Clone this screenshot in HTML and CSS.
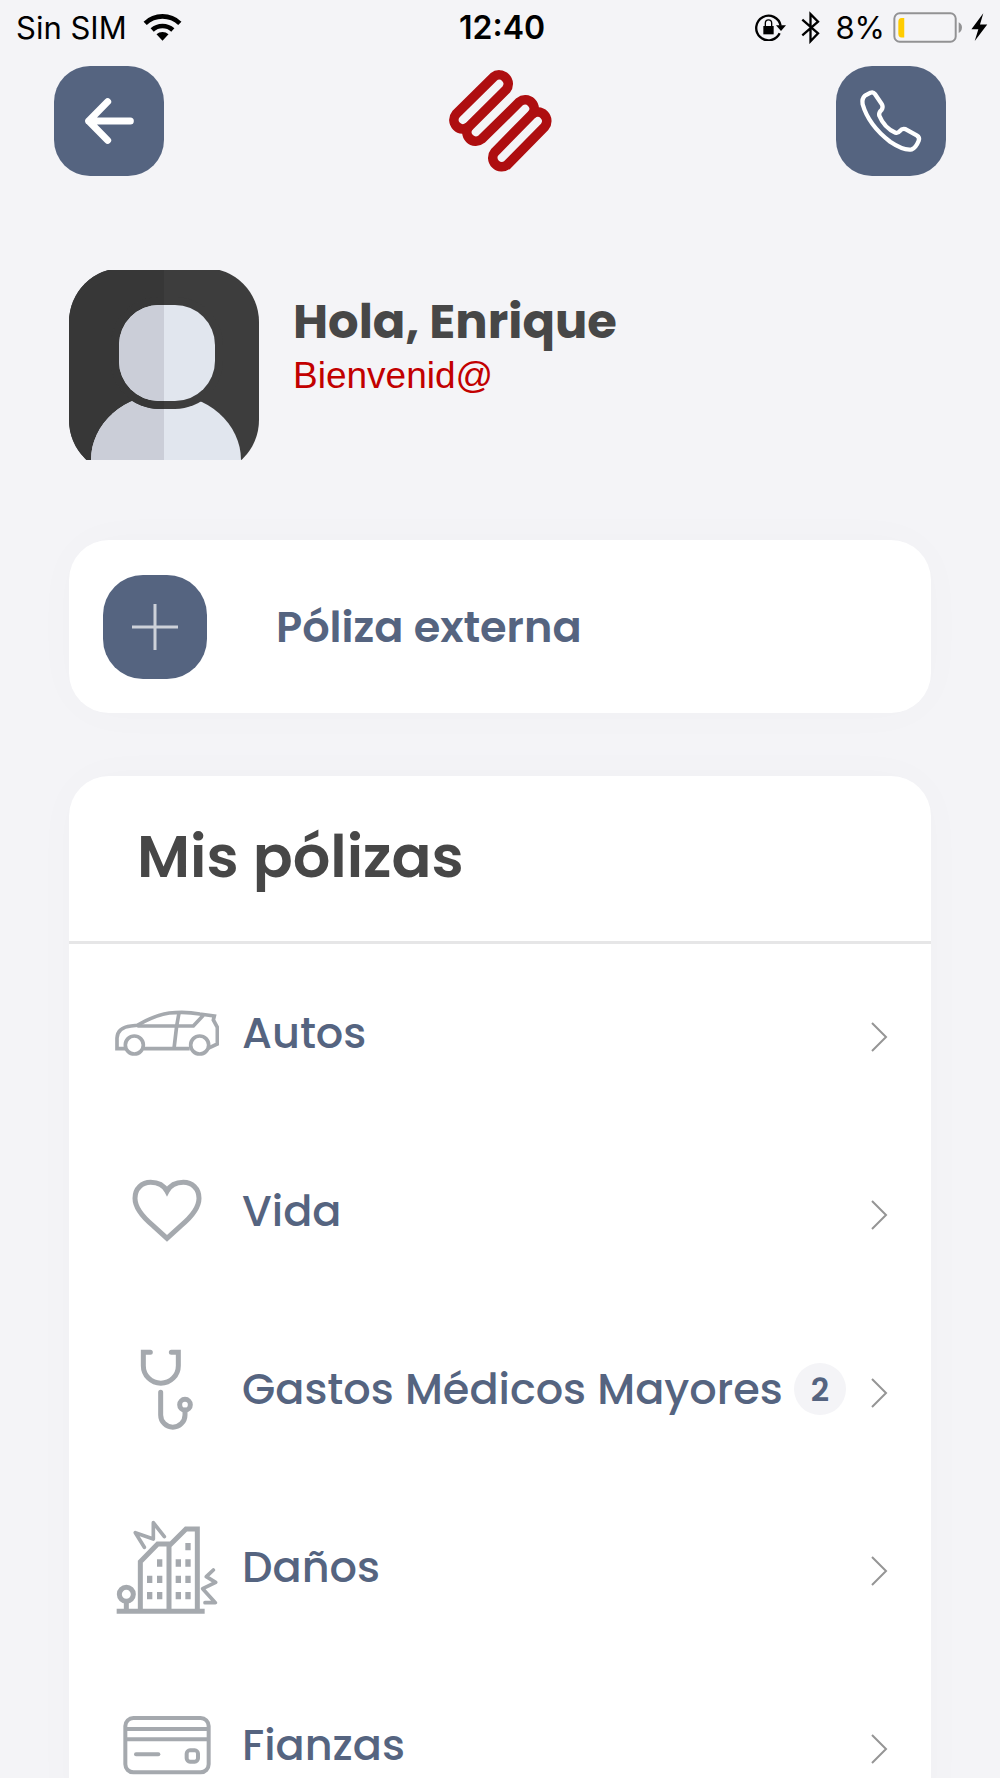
FILE: index.html
```
<!DOCTYPE html>
<html lang="es">
<head>
  <meta charset="utf-8">
  <meta name="viewport" content="width=device-width, initial-scale=1">
  <title>Mis pólizas</title>
  <link rel="stylesheet" href="styles.css">
</head>
<body>
  <div class="status-bar">
    <div class="status-left">
      <span>Sin SIM</span>
      <svg class="wifi" viewBox="430 38 116 84" width="39" height="28">
        <g fill="none" stroke="#000" stroke-width="14">
          <path d="M436 69a75 75 0 0 1 104 0"/>
          <path d="M457 89a46 46 0 0 1 62 0"/>
        </g>
        <path d="M470 102a26 26 0 0 1 36 0l-18 19z"/>
      </svg>
    </div>
    <div class="status-time">12:40</div>
    <div class="status-right">
      <svg class="lock" viewBox="78 38 93 84" width="31" height="28">
        <path d="M152 99A37 37 0 1 1 155 76" fill="none" stroke="#000" stroke-width="7"/>
        <path d="M141 75h30l-15 17z"/>
        <path d="M103 77h31v25h-31z"/>
        <path d="M109 78V68a9 9 0 0 1 19 0v10" fill="none" stroke="#000" stroke-width="4"/>
      </svg>
      <svg class="bluetooth" viewBox="216 32 58 98" width="19" height="33">
        <path d="M220 57l48 42-23 24V40l23 23-48 42" fill="none" stroke="#000" stroke-width="7"/>
      </svg>
      <span>8%</span>
      <svg class="battery" viewBox="489 33 210 94" width="70" height="31">
        <rect x="492" y="37" width="186" height="86" rx="16" fill="none" stroke="#929294" stroke-width="6"/>
        <path d="M522 51v59h-8q-10 0-10-12V63q0-12 10-12z" fill="#ffcc00"/>
        <path d="M687 64q10 5 10 16t-10 17z" fill="#929294"/>
      </svg>
      <svg class="bolt" viewBox="721 38 51 88" width="17" height="29">
        <path d="M758 39l-36 48h21l-11 36 38-50h-22z"/>
      </svg>
    </div>
  </div>

  <header class="top-nav">
    <button class="nav-button" type="button" aria-label="Regresar">
      <svg viewBox="252 288 150 150" width="50" height="50">
        <path d="M391 363H266M323 305l-57 58 57 58" fill="none" stroke="#fff" stroke-width="21" stroke-linecap="round" stroke-linejoin="round"/>
      </svg>
    </button>
    <svg class="logo" viewBox="84 208 314 310" width="105" height="103">
      <g fill="none" stroke="#ae0e10" stroke-width="29">
        <path d="M107 341L220 229a27 27 0 0 1 38 38L145 379a27 27 0 0 1-38-38z"/>
        <path d="M146 378a27 27 0 0 0 38 38L298 304a27 27 0 0 1 38 38"/>
        <path d="M224 455L336 341a27 27 0 0 1 38 38L262 493a27 27 0 0 1-38-38z"/>
      </g>
    </svg>
    <button class="nav-button" type="button" aria-label="Llamar">
      <svg viewBox="386 266 196 196" width="65" height="65">
        <path d="M404 286L421 277Q429 274 434 281L455 312Q460 321 454 329Q445 337 447 346Q462 383 496 398Q504 400 509 393Q516 384 526 387L560 406Q570 412 566 422Q557 444 545 448Q520 452 480 425Q415 375 397 312Q394 295 404 286Z" fill="none" stroke="#fff" stroke-width="13" stroke-linejoin="round"/>
      </svg>
    </button>
  </header>

  <section class="profile">
    <svg class="avatar" viewBox="0 0 190 190" width="190" height="190">
      <defs>
        <clipPath id="left-half"><rect width="95" height="190"/></clipPath>
      </defs>
      <rect y="-2" width="190" height="206" rx="54" fill="#3d3d3d"/>
      <rect y="-2" width="190" height="206" rx="54" fill="#373737" clip-path="url(#left-half)"/>
      <ellipse cx="97" cy="190" rx="75" ry="66" fill="#e1e6ee"/>
      <ellipse cx="97" cy="190" rx="75" ry="66" fill="#cbced8" clip-path="url(#left-half)"/>
      <rect x="42" y="27" width="112" height="112" rx="48" fill="#3d3d3d"/>
      <rect x="42" y="27" width="112" height="112" rx="48" fill="#373737" clip-path="url(#left-half)"/>
      <rect x="50" y="35" width="96" height="96" rx="40" fill="#e1e6ee"/>
      <rect x="50" y="35" width="96" height="96" rx="40" fill="#cbced8" clip-path="url(#left-half)"/>
    </svg>
    <div class="greeting">
      <h1>Hola, Enrique</h1>
      <p>Bienvenid@</p>
    </div>
  </section>

  <main class="content">
    <button class="card add-policy" type="button">
      <span class="add-icon">
        <svg viewBox="0 0 48 48" width="48" height="48">
          <path d="M1 24h46M24 1v46" stroke="#cdd1d9" stroke-width="3"/>
        </svg>
      </span>
      <span>Póliza externa</span>
    </button>

    <section class="card policies">
      <h2>Mis pólizas</h2>
      <ul class="policy-list">
        <li>
          <a href="#autos">
            <svg class="policy-icon" viewBox="46 4 312 312">
              <g stroke-width="11">
                <path d="M76 207H52v-32q2-32 42-36l19-2q50-30 96-37 50-5 91 3l44 6-3 12 12 22v50l-28 13M132 207h138"/>
                <path d="M113 139h168l30-32M238 100l-7 39-8 68"/>
                <circle cx="104" cy="196" r="27"/>
                <circle cx="300" cy="196" r="27"/>
              </g>
            </svg>
            <span class="policy-name">Autos</span>
            <svg class="chevron" viewBox="0 0 18 32"><path d="M2 2l14 14L2 30"/></svg>
          </a>
        </li>
        <li>
          <a href="#vida">
            <svg class="policy-icon" viewBox="46 537 312 312">
              <path stroke-width="15" d="M202 775L160 737Q106 692 106 655C106 625 127 607 153 607C176 607 193 617 202 634C211 617 228 607 251 607C277 607 298 625 298 655Q298 692 244 737Z"/>
            </svg>
            <span class="policy-name">Vida</span>
            <svg class="chevron" viewBox="0 0 18 32"><path d="M2 2l14 14L2 30"/></svg>
          </a>
        </li>
        <li>
          <a href="#gastos-medicos">
            <svg class="policy-icon" viewBox="46 21 312 312">
              <g stroke-width="15" stroke-linecap="round">
                <path d="M152 67h-21v40a52 52 0 0 0 105 0V67h-21"/>
                <path d="M183 187v68a36 36 0 0 0 73 0v-14"/>
                <circle cx="256" cy="224" r="16"/>
              </g>
            </svg>
            <span class="policy-name">Gastos Médicos Mayores</span>
            <span class="badge">2</span>
            <svg class="chevron" viewBox="0 0 18 32"><path d="M2 2l14 14L2 30"/></svg>
          </a>
        </li>
        <li>
          <a href="#danos">
            <svg class="policy-icon" viewBox="46 45 312 312">
              <g stroke-width="15">
                <path d="M51 334h264M122 334V185l52-53h34v202M210 136l49-49h34v247M80 305v29"/>
                <circle cx="80" cy="283" r="21"/>
              </g>
              <path stroke-width="11" stroke-linecap="round" stroke-linejoin="round" d="M134 142L107 98l54 19V68l33 42M341 210l-21 20 28 17-39 19 38 42h-31"/>
              <path class="windows" d="M257 129h16v22h-16zM172 178h16v22h-16zM228 178h16v22h-16zM257 178h16v22h-16zM142 227h16v22h-16zM172 227h16v22h-16zM228 227h16v22h-16zM257 227h16v22h-16zM142 276h16v22h-16zM172 276h16v22h-16zM228 276h16v22h-16zM257 276h16v22h-16z"/>
            </svg>
            <span class="policy-name">Daños</span>
            <svg class="chevron" viewBox="0 0 18 32"><path d="M2 2l14 14L2 30"/></svg>
          </a>
        </li>
        <li>
          <a href="#fianzas">
            <svg class="policy-icon" viewBox="46 579 312 312">
              <g stroke-width="12">
                <rect x="77" y="654" width="250" height="163" rx="24"/>
                <path d="M77 687h250M77 718h250"/>
                <path d="M109 763h67" stroke-linecap="round"/>
                <rect x="261" y="751" width="34" height="34" rx="10"/>
              </g>
            </svg>
            <span class="policy-name">Fianzas</span>
            <svg class="chevron" viewBox="0 0 18 32"><path d="M2 2l14 14L2 30"/></svg>
          </a>
        </li>
      </ul>
    </section>
  </main>
</body>
</html>
```
FILE: styles.css
```
* {
  box-sizing: border-box;
}

body {
  height: 100vh;
  margin: 0;
  overflow: hidden;
  background-color: #f4f4f7;
  color: #474747;
  font-family: Poppins, Inter, sans-serif;
}

svg {
  display: block;
  flex: none;
}

/* status bar */
.status-bar {
  display: grid;
  grid-template-columns: 1fr auto 1fr;
  align-items: center;
  height: 54px;
  padding: 0 12px 0 16px;
  color: #000;
  font-family: Inter, sans-serif;
  font-size: 31px;
}

.status-left,
.status-right {
  display: flex;
  align-items: center;
}

.status-left {
  gap: 16px;
}

.status-right {
  justify-content: flex-end;
  gap: 8px;
}

.status-time {
  font-size: 32px;
  font-weight: 600;
}

.bluetooth {
  margin: 0 7px;
}

/* header */
.top-nav {
  display: flex;
  align-items: center;
  justify-content: space-between;
  padding: 12px 54px;
}

.nav-button {
  display: flex;
  align-items: center;
  justify-content: center;
  width: 110px;
  height: 110px;
  padding: 0;
  border: 0;
  border-radius: 36px;
  background-color: #556480;
  cursor: pointer;
}

/* profile */
.profile {
  display: flex;
  gap: 34px;
  padding: 82px 69px 80px;
}

.greeting {
  padding-top: 24px;
}

.greeting h1 {
  margin: 0;
  font-size: 48px;
  font-weight: 700;
  line-height: 56px;
}

.greeting p {
  margin: 4px 0 0;
  color: #c20000;
  font-family: "Liberation Sans", Arial, sans-serif;
  font-size: 37px;
  line-height: 44px;
}

/* cards */
.content {
  display: flex;
  flex-direction: column;
  gap: 63px;
  padding: 0 69px;
}

.card {
  border-radius: 40px;
  background-color: #fff;
  box-shadow: 0 0 50px rgba(0, 0, 0, 0.02);
}

.add-policy {
  display: flex;
  align-items: center;
  gap: 69px;
  width: 100%;
  padding: 35px 34px 34px;
  border: 0;
  color: #556480;
  font-family: inherit;
  font-size: 43px;
  font-weight: 600;
  text-align: left;
  cursor: pointer;
}

.add-icon {
  display: flex;
  align-items: center;
  justify-content: center;
  width: 104px;
  height: 104px;
  border-radius: 40px;
  background-color: #556480;
}

.policies h2 {
  margin: 0;
  padding: 46px 68px 49px;
  border-bottom: 3px solid #e6e6e7;
  font-size: 59px;
  font-weight: 600;
  line-height: 70px;
}

.policy-list {
  margin: 0;
  padding: 0;
  list-style: none;
}

.policy-list a {
  display: flex;
  align-items: center;
  height: 178px;
  padding: 0 43px 0 46px;
  color: #556480;
  font-size: 43px;
  font-weight: 500;
  text-decoration: none;
}

.policy-icon {
  width: 104px;
  height: 104px;
  margin-right: 23px;
  fill: none;
  stroke: #a5a9ae;
}

.policy-icon .windows {
  fill: #a5a9ae;
  stroke: none;
}

.policy-name {
  white-space: nowrap;
}

.badge {
  width: 52px;
  height: 52px;
  margin-left: 11px;
  border-radius: 50%;
  background-color: #f4f4f7;
  font-size: 32px;
  font-weight: 600;
  line-height: 54px;
  text-align: center;
}

.chevron {
  width: 18px;
  height: 32px;
  margin-top: 8px;
  margin-left: auto;
  fill: none;
  stroke: #959595;
  stroke-width: 2;
}
```
